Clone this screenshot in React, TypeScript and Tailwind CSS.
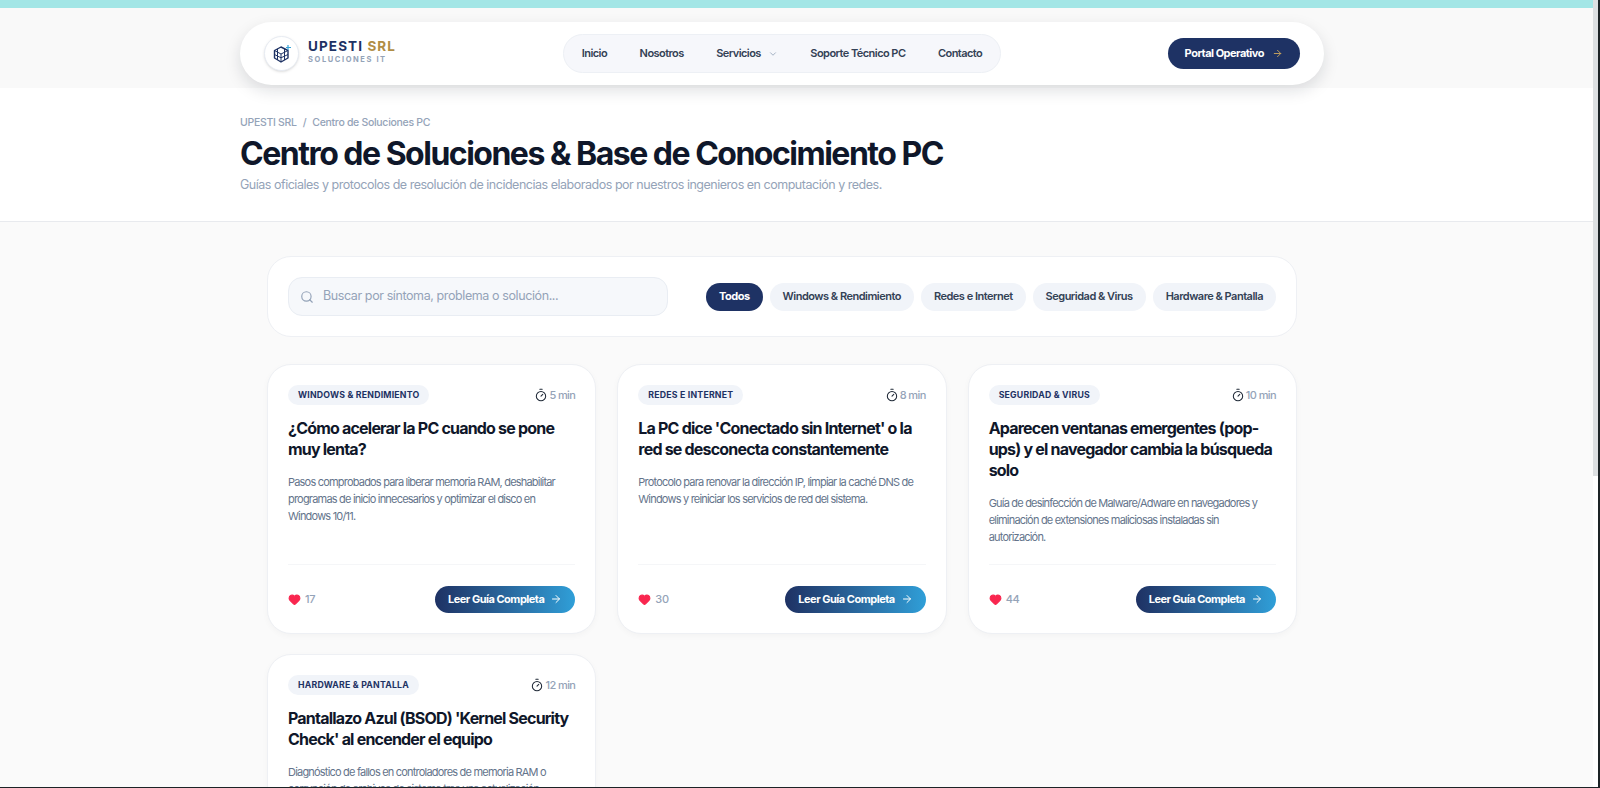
import { ArrowRight, ChevronDown, Heart, Search, Timer } from "lucide-react";

interface Guide {
  tag: string;
  time: string;
  title: string;
  desc: string;
  likes?: number;
}

const guides: Guide[] = [
  {
    tag: "WINDOWS & RENDIMIENTO",
    time: "5 min",
    title: "¿Cómo acelerar la PC cuando se pone muy lenta?",
    desc: "Pasos comprobados para liberar memoria RAM, deshabilitar programas de inicio innecesarios y optimizar el disco en Windows 10/11.",
    likes: 17,
  },
  {
    tag: "REDES E INTERNET",
    time: "8 min",
    title: "La PC dice 'Conectado sin Internet' o la red se desconecta constantemente",
    desc: "Protocolo para renovar la dirección IP, limpiar la caché DNS de Windows y reiniciar los servicios de red del sistema.",
    likes: 30,
  },
  {
    tag: "SEGURIDAD & VIRUS",
    time: "10 min",
    title: "Aparecen ventanas emergentes (pop-ups) y el navegador cambia la búsqueda solo",
    desc: "Guía de desinfección de Malware/Adware en navegadores y eliminación de extensiones maliciosas instaladas sin autorización.",
    likes: 44,
  },
  {
    tag: "HARDWARE & PANTALLA",
    time: "12 min",
    title: "Pantallazo Azul (BSOD) 'Kernel Security Check' al encender el equipo",
    desc: "Diagnóstico de fallos en controladores de memoria RAM o corrupción de archivos de sistema tras una actualización.",
  },
];

const filters = ["Windows & Rendimiento", "Redes e Internet", "Seguridad & Virus", "Hardware & Pantalla"];

function Logo() {
  return (
    <div className="flex h-[35px] w-[35px] items-center justify-center rounded-full border border-[#e8ecf3] bg-white shadow-sm">
      <svg width="22" height="22" viewBox="0 0 22 22" fill="none" stroke="#1e3264" strokeWidth="1.4" strokeLinejoin="round">
        <path d="M10 4 L17 7.5 V15 L10 19 L3.5 15 V7.5 Z" />
        <path d="M3.5 7.5 L10 11 L17 7.5 M10 11 V19 M6.5 5.8 V17 M13.5 5.8 V17 M3.5 11.5 L10 14.8 L17 11.5" strokeWidth="1" />
        <path d="M17 2 V7 M15 4.5 H20" stroke="#38a3d8" strokeWidth="1.2" />
      </svg>
    </div>
  );
}

function GuideCard({ guide }: { guide: Guide }) {
  return (
    <div className="flex h-[270px] flex-col rounded-[24px] border border-[#eef0f4] bg-white px-[20px] pt-[20px] shadow-[0_2px_6px_rgba(15,23,42,0.03)]">
      <div className="flex items-center justify-between">
        <span className="flex h-[20px] items-center rounded-full bg-[#f1f4f9] px-[10px] pt-[1px] text-[8.75px] font-bold tracking-[0.2px] text-[#1e3264]">
          {guide.tag}
        </span>
        <span className="flex items-center gap-[1px] text-[11px] font-medium tracking-[-0.6px] text-[#94a3b8]">
          <Timer className="h-[14px] w-[14px] text-[#1f2937]" strokeWidth={1.8} />
          {guide.time}
        </span>
      </div>
      <h3 className="mt-[13px] text-[16px] leading-[21px] font-bold tracking-[-0.8px] text-[#0f172a]">{guide.title}</h3>
      <p className="mt-[14px] text-[11px] leading-[16.8px] tracking-[-0.8px] text-[#64748b]">{guide.desc}</p>
      <div className="mt-auto flex h-[69px] shrink-0 items-center justify-between border-t border-[#f5f6f8]">
        <span className="flex items-center gap-[4px] text-[11px] leading-none font-medium tracking-[-0.3px] text-[#94a3b8]">
          <Heart className="h-[13px] w-[13px] fill-[#f9264f] text-[#f9264f]" />
          {guide.likes}
        </span>
        <button
          type="button"
          className="flex h-[27px] items-center gap-[6px] rounded-full bg-gradient-to-r from-[#1e3264] to-[#2f9fd8] px-[13px] text-[11px] font-bold tracking-[-0.5px] text-white"
        >
          Leer Guía Completa
          <ArrowRight className="h-[12px] w-[12px]" />
        </button>
      </div>
    </div>
  );
}

export default function App() {
  return (
    <div className="relative h-screen overflow-hidden bg-[#fafafa] font-['Inter',sans-serif]">
      <div className="h-[8px] bg-[#a3e6e6]" />

      {/* header */}
      <div className="h-[80px] bg-[#f9f9f9] pt-[14px] pr-[276px] pl-[240px]">
        <header className="relative z-10 flex h-[63px] items-center justify-between rounded-full bg-white px-[24px] shadow-[0_6px_16px_rgba(15,23,42,0.13)]">
          <div className="flex w-[292px] items-center gap-[9px]">
            <Logo />
            <div className="pb-[3px]">
              <div className="text-[13.5px] leading-[15px] font-bold tracking-[1.1px] text-[#1e3264]">
                UPESTI <span className="text-[#b08d45]">SRL</span>
              </div>
              <div className="mt-[1px] text-[7.5px] leading-[10px] font-bold tracking-[1.6px] text-[#94a3b8]">SOLUCIONES IT</div>
            </div>
          </div>
          <nav className="flex h-[39px] items-center gap-[32.5px] rounded-full border border-[#edf0f5] bg-[#f6f7fb] px-[18px] text-[11px] font-semibold tracking-[-0.55px] text-[#334155]">
            <span>Inicio</span>
            <span>Nosotros</span>
            <span className="flex items-center gap-[7px]">
              Servicios <ChevronDown className="h-[10px] w-[10px] text-[#94a3b8]" />
            </span>
            <span>Soporte Técnico PC</span>
            <span>Contacto</span>
          </nav>
          <div className="flex w-[292px] justify-end">
            <button
              type="button"
              className="flex h-[31px] items-center gap-[8px] rounded-full bg-[#1e3264] px-[17px] text-[11px] font-bold tracking-[-0.5px] text-white"
            >
              Portal Operativo
              <ArrowRight className="h-[11px] w-[11px] text-[#c9a45c]" />
            </button>
          </div>
        </header>
      </div>

      {/* page title */}
      <section className="h-[134px] border-b border-[#e8eaee] bg-white px-[240px] pt-[28px]">
        <div className="text-[10.5px] leading-[14px] font-medium tracking-[-0.3px] text-[#94a3b8]">
          UPESTI SRL<span className="mx-[6px]">/</span>Centro de Soluciones PC
        </div>
        <h1 className="mt-[3px] text-[32px] leading-[42px] font-bold tracking-[-1.5px] text-[#0f172a]">
          Centro de Soluciones &amp; Base de Conocimiento PC
        </h1>
        <p className="mt-[1px] text-[12.5px] leading-[18px] tracking-[-0.48px] text-[#94a3b8]">
          Guías oficiales y protocolos de resolución de incidencias elaborados por nuestros ingenieros en computación y redes.
        </p>
      </section>

      {/* search + cards */}
      <main className="pt-[34px] pr-[303px] pl-[267px]">
        <div className="flex h-[81px] items-center justify-between rounded-[24px] border border-[#eef0f4] bg-white px-[20px]">
          <div className="flex h-[39px] w-[380px] items-center gap-[9px] rounded-[14px] border border-[#e9edf3] bg-[#f6f8fb] px-[11px]">
            <Search className="h-[14px] w-[14px] text-[#94a3b8]" />
            <span className="text-[12.5px] tracking-[-0.4px] text-[#94a3b8]">Buscar por síntoma, problema o solución...</span>
          </div>
          <div className="flex items-center gap-[7px] text-[11px] font-semibold tracking-[-0.5px] text-[#334155]">
            <span className="flex h-[28px] items-center rounded-full bg-[#1e3264] px-[13px] font-bold text-white">Todos</span>
            {filters.map((f) => (
              <span key={f} className="flex h-[28px] items-center rounded-full bg-[#f1f4f9] px-[13px]">
                {f}
              </span>
            ))}
          </div>
        </div>

        <div className="mt-[27px] grid grid-cols-3 gap-x-[21px] gap-y-[20px]">
          {guides.map((g) => (
            <GuideCard key={g.tag} guide={g} />
          ))}
        </div>
      </main>

      {/* window scrollbar and edges */}
      <div className="absolute top-0 right-[2px] h-full w-[5px] bg-white">
        <div className="h-[476px] bg-[#dcdfe1]" />
      </div>
      <div className="absolute top-0 right-0 h-full w-[2px] bg-[#1c2326]" />
      <div className="absolute right-0 bottom-0 left-0 h-[1px] bg-[#1c2326]" />
    </div>
  );
}
